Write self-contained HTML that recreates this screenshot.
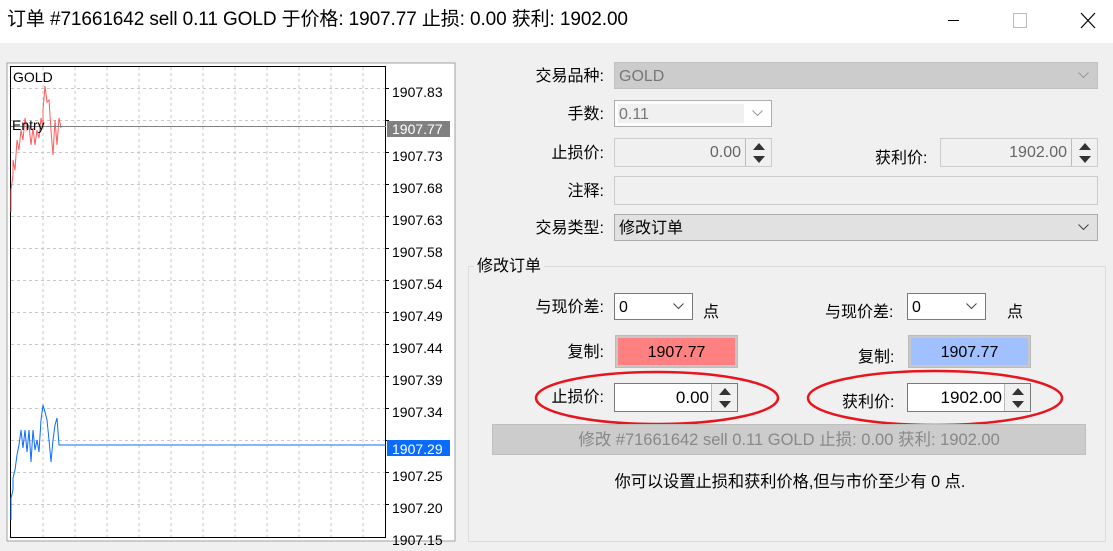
<!DOCTYPE html>
<html><head><meta charset="utf-8"><style>
*{margin:0;padding:0;box-sizing:border-box}
body{width:1113px;height:551px;background:#f0f0f0;font-family:"Liberation Sans","Noto Sans CJK SC",sans-serif;font-size:16px;color:#000;position:relative;overflow:hidden}
.a{position:absolute}
.title{left:0;top:0;width:1113px;height:43px;background:#fff}
.lbl{text-align:right;width:150px;line-height:20px}
.box{border:1px solid #adadad;background:#fff}
.sp{position:absolute;right:0;top:0;bottom:0;width:26px;border-left:1px solid #bbb;background:#f0f0f0}
.sp div{height:50%;position:relative}
.up::after{content:"";position:absolute;left:7px;top:4px;border-left:6px solid transparent;border-right:6px solid transparent;border-bottom:7px solid #333}
.dn::after{content:"";position:absolute;left:7px;top:3px;border-left:6px solid transparent;border-right:6px solid transparent;border-top:7px solid #333}
.chev{position:absolute;right:8px;top:9px}
.t{padding-top:1px}
</style></head><body>
<div class="a title"></div>
<div class="a" style="left:7px;top:9px;font-size:19px;line-height:22px;letter-spacing:-0.1px">订单 #71661642 sell 0.11 GOLD 于价格: 1907.77 止损: 0.00 获利: 1902.00</div>
<div class="a" style="left:948px;top:20px;width:11px;height:1px;background:#000"></div>
<div class="a" style="left:1013px;top:13px;width:14px;height:15px;border:1px solid #bbb"></div>
<svg class="a" style="left:1080px;top:12px" width="16" height="17"><path d="M1 1L15 16M15 1L1 16" stroke="#000" stroke-width="1.2"/></svg>

<svg class="a" style="left:0;top:0" width="460" height="551">
<rect x="7" y="63" width="448" height="478" fill="#fff" stroke="#a0a0a0"/>
<rect x="10.5" y="66.5" width="375" height="471" fill="#fff" stroke="#000"/>
<g stroke="#c8c8c8" stroke-dasharray="3,3">
<path d="M43 67V537M75 67V537M107 67V537M139 67V537M171 67V537M203 67V537M235 67V537M267 67V537M299 67V537M331 67V537M363 67V537"/>
<path d="M11 88.5H385M11 120.5H385M11 152.5H385M11 184.5H385M11 216.5H385M11 248.5H385M11 280.5H385M11 312.5H385M11 344.5H385M11 376.5H385M11 408.5H385M11 440.5H385M11 472.5H385M11 504.5H385"/>
</g>
<g stroke="#000"><path d="M385 88.5h4M385 120.5h4M385 152.5h4M385 184.5h4M385 216.5h4M385 248.5h4M385 280.5h4M385 312.5h4M385 344.5h4M385 376.5h4M385 408.5h4M385 440.5h4M385 472.5h4M385 504.5h4"/></g>
<path d="M11 212V190L13 175V160L15 170L17 140L19 150L21 130L23 140L25 118L27 130L29 125L31 145L33 128L35 145L37 130L39 138L41 118L43 128V110L45 86L47 102L49 100L51 130L53 155L55 120L57 145L59 118L61 128" fill="none" stroke="#ff5a5a"/>
<path d="M386 126.5H11" stroke="#808080"/>
<path d="M11 520V498L13 490V478L15 470L17 455L19 445L21 430L23 448L25 430L27 452L29 430L31 462L33 430L35 450L37 440L39 452L41 420L43 405L45 412L47 420L49 440L51 462L53 440L55 425L57 418L59 445H386" fill="none" stroke="#0a6cff"/>
<rect x="387" y="121" width="63" height="16" fill="#808080"/>
<rect x="387" y="440" width="63" height="16" fill="#0a6cff"/>
<g font-size="14" font-family="Liberation Sans,sans-serif">
<text x="13" y="82">GOLD</text><text x="12" y="130">Entry</text>
<text x="392" y="97">1907.83</text><text x="392" y="161">1907.73</text><text x="392" y="193">1907.68</text><text x="392" y="225">1907.63</text><text x="392" y="257">1907.58</text><text x="392" y="289">1907.54</text><text x="392" y="321">1907.49</text><text x="392" y="353">1907.44</text><text x="392" y="385">1907.39</text><text x="392" y="417">1907.34</text><text x="392" y="481">1907.25</text><text x="392" y="513">1907.20</text><text x="392" y="545">1907.15</text>
<text x="392" y="134" fill="#fff">1907.77</text><text x="392" y="454" fill="#fff">1907.29</text>
</g></svg>

<div class="a lbl" style="left:454px;top:67px">交易品种:</div>
<div class="a" style="left:614px;top:62px;width:484px;height:27px;background:#ccc;border:1px solid #c0c0c0;color:#777;padding:4px 4px;line-height:19px">GOLD<svg class="chev" width="11" height="7"><path d="M0.5 0.5L5.5 5.5L10.5 0.5" fill="none" stroke="#999"/></svg></div>
<div class="a lbl" style="left:454px;top:105px">手数:</div>
<div class="a box" style="left:614px;top:100px;width:158px;height:27px"><div style="position:absolute;left:3px;top:3px;width:126px;height:19px;background:#f0f0f0;color:#777;line-height:21px;padding-left:1px">0.11</div><svg class="chev" width="11" height="7"><path d="M0.5 0.5L5.5 5.5L10.5 0.5" fill="none" stroke="#999"/></svg></div>
<div class="a lbl" style="left:454px;top:144px">止损价:</div>
<div class="a" style="left:614px;top:138px;width:158px;height:29px;border:1px solid #ccc;background:#f0f0f0;color:#666;text-align:right;padding:5px 30px 0 0">0.00<div class="sp"><div class="up"></div><div class="dn"></div></div></div>
<div class="a" style="left:875px;top:144px">获利价:</div>
<div class="a" style="left:940px;top:138px;width:158px;height:29px;border:1px solid #ccc;background:#f0f0f0;color:#666;text-align:right;padding:5px 30px 0 0">1902.00<div class="sp"><div class="up"></div><div class="dn"></div></div></div>
<div class="a lbl" style="left:454px;top:182px">注释:</div>
<div class="a" style="left:614px;top:176px;width:484px;height:29px;border:1px solid #ccc;background:#f0f0f0"></div>
<div class="a lbl" style="left:454px;top:219px">交易类型:</div>
<div class="a" style="left:614px;top:214px;width:484px;height:27px;background:#e1e1e1;border:1px solid #adadad;padding:4px 4px;line-height:19px">修改订单<svg class="chev" width="11" height="7"><path d="M0.5 0.5L5.5 5.5L10.5 0.5" fill="none" stroke="#444"/></svg></div>

<div class="a" style="left:468px;top:266px;width:638px;height:276px;border:1px solid #dcdcdc"></div>
<div class="a" style="left:474px;top:257px;background:#f0f0f0;padding:0 3px;line-height:20px">修改订单</div>

<div class="a lbl" style="left:454px;top:298px">与现价差:</div>
<div class="a box" style="left:614px;top:293px;width:79px;height:27px;border-color:#7a7a7a;padding:4px 4px;line-height:19px">0<svg class="chev" width="11" height="7"><path d="M0.5 0.5L5.5 5.5L10.5 0.5" fill="none" stroke="#444"/></svg></div>
<div class="a" style="left:703px;top:298px">点</div>
<div class="a" style="left:825px;top:298px">与现价差:</div>
<div class="a box" style="left:907px;top:293px;width:79px;height:27px;border-color:#7a7a7a;padding:4px 4px;line-height:19px">0<svg class="chev" width="11" height="7"><path d="M0.5 0.5L5.5 5.5L10.5 0.5" fill="none" stroke="#444"/></svg></div>
<div class="a" style="left:1007px;top:298px">点</div>

<div class="a lbl" style="left:454px;top:343px">复制:</div>
<div class="a" style="left:616px;top:336px;width:121px;height:31px;background:#ff8080;border:2px solid #c8c8c8;outline:1px solid #bbb;text-align:center;line-height:29px">1907.77</div>
<div class="a" style="left:858px;top:343px">复制:</div>
<div class="a" style="left:909px;top:336px;width:121px;height:31px;background:#a0c0ff;border:2px solid #c8c8c8;outline:1px solid #bbb;text-align:center;line-height:29px">1907.77</div>

<div class="a lbl" style="left:454px;top:388px">止损价:</div>
<div class="a box" style="left:614px;top:383px;width:124px;height:29px;border-color:#7a7a7a;text-align:right;padding:4px 28px 0 0;font-size:17px">0.00<div class="sp" style="background:#f0f0f0"><div class="up"></div><div class="dn"></div></div></div>
<div class="a" style="left:842px;top:388px">获利价:</div>
<div class="a box" style="left:907px;top:383px;width:124px;height:29px;border-color:#7a7a7a;text-align:right;padding:4px 28px 0 0;font-size:17px">1902.00<div class="sp" style="background:#f0f0f0"><div class="up"></div><div class="dn"></div></div></div>
<svg class="a" style="left:0;top:0" width="1113" height="551"><ellipse cx="657" cy="398" rx="121" ry="26" fill="none" stroke="#e8141e" stroke-width="2.5"/><ellipse cx="935" cy="398" rx="127" ry="27" fill="none" stroke="#e8141e" stroke-width="2.5"/></svg>

<div class="a" style="left:492px;top:424px;width:594px;height:31px;background:#ccc;border:1px solid #bfbfbf;text-align:center;line-height:30px;color:#888;font-size:16.5px">修改 #71661642 sell 0.11 GOLD 止损: 0.00 获利: 1902.00</div>
<div class="a" style="left:468px;top:472px;width:644px;text-align:center;line-height:20px;font-size:16.2px">你可以设置止损和获利价格,但与市价至少有 0 点.</div>
</body></html>
